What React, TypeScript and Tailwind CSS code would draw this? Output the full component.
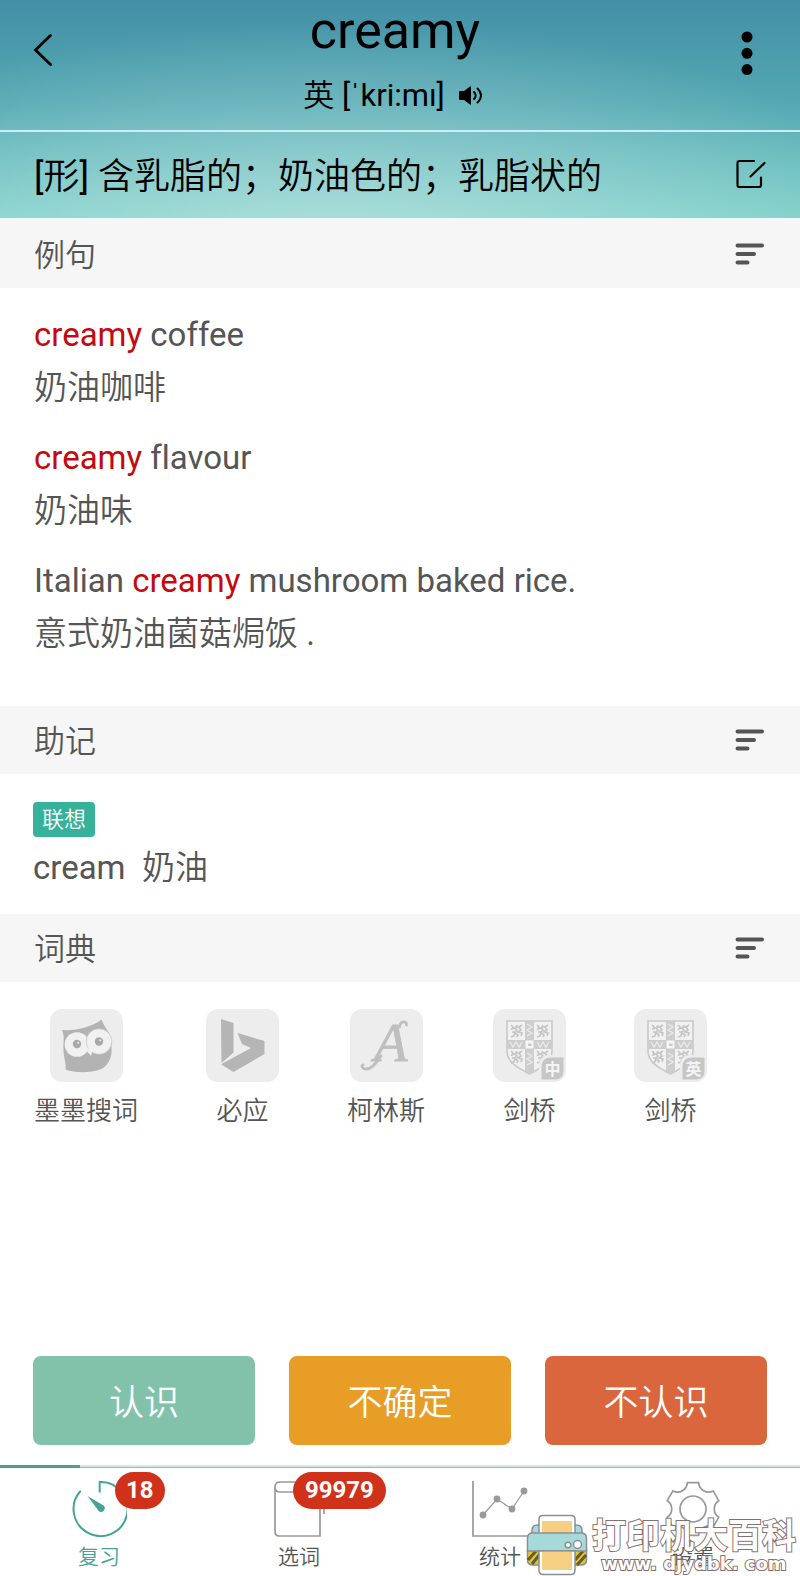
import type { ReactNode } from "react"

const examples = [
  { before: "", word: "creamy", after: " coffee", zh: "奶油咖啡" },
  { before: "", word: "creamy", after: " flavour", zh: "奶油味" },
  { before: "Italian ", word: "creamy", after: " mushroom baked rice.", zh: "意式奶油菌菇焗饭 ." },
]

function SectionHeader({ title }: { title: string }) {
  return (
    <div className="flex h-[68px] items-center justify-between bg-[#f6f6f6] pl-[34px] pr-[35px]">
      <h2 className="pt-1 text-[31px] leading-10">{title}</h2>
      <button type="button" aria-label={`${title}排序`}>
        <svg width="30" height="22" viewBox="0 0 30 22" stroke="#555" strokeWidth="4" strokeLinecap="round">
          <path d="M2.5 2.5H27M2.5 11H19M2.5 19.5H12.5" />
        </svg>
      </button>
    </div>
  )
}

function OwlIcon() {
  return (
    <svg className="size-[73px]" viewBox="0 0 73 73">
      <path
        d="M12 21C26 22 42 18 51.5 10.5C53 14 55 18 57 21C61 25 62 35 61.5 44C60 53 56 58 50 60.5C40 64 25 64 15.5 60.5C16.5 56 14 50 13.5 42C13 34 15 28 12 21Z"
        fill="#b3b3b3"
      />
      <circle cx="27" cy="35.5" r="12.3" fill="#f1f1f1" />
      <circle cx="49" cy="32.5" r="12.8" fill="#f1f1f1" stroke="#c4c4c4" strokeWidth=".7" />
      <path d="M35 40L43 39L41 47Z" fill="#f1f1f1" />
      <circle cx="27" cy="35" r="4.2" fill="#a9a9a9" />
      <circle cx="49" cy="32.5" r="4.2" fill="#a9a9a9" />
      <circle cx="28.2" cy="33.7" r="1" fill="#eee" />
      <circle cx="50.2" cy="31.2" r="1" fill="#eee" />
    </svg>
  )
}

function BingIcon() {
  return (
    <svg className="size-[73px]" viewBox="0 0 73 73" fill="#b5b5b5">
      <path d="M15 10L27.5 14V43.5L15.5 54Z" />
      <path d="M31.5 24L58.5 32V45L27.5 63L15 55.2L45 39L36 35Z" />
    </svg>
  )
}

function CollinsIcon() {
  return (
    <svg className="size-[73px]" viewBox="0 0 73 73">
      <text
        x="24"
        y="52"
        fontFamily="Liberation Serif, serif"
        fontStyle="italic"
        fontSize="55"
        fill="#bfbfbf"
        stroke="#bfbfbf"
        strokeWidth=".8"
      >
        A
      </text>
      <path
        d="M49.5 18C50 12 57 11 56.5 16M31 47C25 56 21 60 16 60C12 60 11 57 13 56"
        fill="none"
        stroke="#bfbfbf"
        strokeWidth="2.8"
        strokeLinecap="round"
      />
    </svg>
  )
}

function CambridgeIcon({ mark }: { mark: string }) {
  const quarters = [
    [17, 15],
    [43, 15],
    [17, 41],
    [43, 41],
  ]
  return (
    <svg className="size-[73px]" viewBox="0 0 73 73">
      <path d="M14 12H59V42C59 54 46 60 36.5 65C27 60 14 54 14 42Z" fill="#f1f1f1" stroke="#c9c9c9" strokeWidth="1.6" />
      <path d="M32 12H41V62L36.5 65L32 62ZM14 31H59V40H14Z" fill="#cdcdcd" />
      <path
        d="M34 15L39 18L34 21L39 24L34 27M34 44L39 47L34 50L39 53L34 56M17 33L20 38L23 33L26 38L29 33M44 33L47 38L50 33L53 38L56 33"
        fill="none"
        stroke="#ececec"
        strokeWidth="1.2"
      />
      <path d="M32.5 31.5H40.5V39.5H32.5Z" fill="#f6f6f6" />
      <path d="M35 34.5H38.5V37H35Z" fill="#c9c9c9" />
      {quarters.map(([x, y]) => (
        <path
          key={`${x}-${y}`}
          transform={`translate(${x} ${y})`}
          d="M1 1L3 3L2 5L5 4L7 6L5 8L2 8M7 1L6 3L9 3L12 1M9 3L11 6L8 8L12 9L11 12M5 8L4 12L1 13M5 9L8 11L7 13"
          fill="none"
          stroke="#c4c4c4"
          strokeWidth="1.6"
        />
      ))}
      <path d="M46 73V57Q46 46 57 46H73V73Z" fill="#ededed" />
      <path d="M48.5 70.5V58Q48.5 48.5 58 48.5H70.5V62Q70.5 70.5 62 70.5Z" fill="#c6c6c6" />
      <text
        x="59.5"
        y="65.5"
        textAnchor="middle"
        fontFamily="Noto Sans CJK SC, sans-serif"
        fontWeight="700"
        fontSize="16"
        fill="#f4f4f4"
      >
        {mark}
      </text>
    </svg>
  )
}

function TimerIcon() {
  return (
    <svg className="size-14" viewBox="0 0 56 56" fill="none" stroke="#43a397" strokeWidth="2">
      <path d="M9.7 9.7A27 27 0 1 0 28.7 1V11.5" />
      <path d="M16.5 15L32.5 24.5A3.6 3.6 0 1 1 27.5 29.8Z" fill="#43a397" stroke="none" />
    </svg>
  )
}

function BookIcon() {
  return (
    <svg className="size-14" viewBox="0 0 56 56" fill="none" stroke="#999" strokeWidth="1.7">
      <path d="M53 33V1H9Q4 1 4 6V50Q4 55 8 55H49V11H9Q4 11 4 6" />
    </svg>
  )
}

function ChartIcon() {
  return (
    <svg className="size-14" viewBox="0 0 56 56" fill="none" stroke="#999" strokeWidth="1.7">
      <path d="M1 0V55H56" />
      <path d="M11 34L25 18L40 28L52 10" strokeWidth="1.2" />
      <g fill="#999" stroke="none">
        <circle cx="11" cy="34" r="3.4" />
        <circle cx="25" cy="18" r="3.4" />
        <circle cx="40" cy="28" r="3.4" />
        <circle cx="52" cy="10" r="3.4" />
      </g>
    </svg>
  )
}

function GearIcon() {
  return (
    <svg className="size-14" viewBox="0 0 56 56" fill="none" stroke="#999" strokeWidth="1.7">
      <circle cx="28" cy="28" r="13" />
      <path d="M22.4 1.6H33.6A10 10 0 0 0 48.1 9.9L53.7 19.7A10 10 0 0 0 53.7 36.3L48.1 46.1A10 10 0 0 0 33.6 54.4H22.4A10 10 0 0 0 7.9 46.1L2.3 36.3A10 10 0 0 0 2.3 19.7L7.9 9.9A10 10 0 0 0 22.4 1.6Z" />
    </svg>
  )
}

function PrinterIcon() {
  return (
    <svg className="h-[62px] w-[62px] shrink-0" viewBox="0 0 62 62" stroke="#8a8f94" strokeWidth="1.5">
      <path d="M6 20V16Q6 11 12 11H50Q56 11 56 16V20Z" fill="#a5dad8" />
      <path d="M1.5 36V46Q1.5 51 7 51H55Q60.5 51 60.5 46V36Z" fill="#e3c52c" />
      <path d="M2 46L10 37M6 50L14 40M49 46L57 37M51 51L60 41" stroke="#665c30" strokeWidth="3" />
      <path d="M13 20V5Q13 1.5 17 1.5H45Q49 1.5 49 5V20Z" fill="#fff" />
      <path d="M16 20V7H46V20Z" fill="#f7cf82" stroke="none" />
      <path d="M1.5 37V24Q1.5 19 7 19H55Q60.5 19 60.5 24V37Z" fill="#a5dad8" />
      <path d="M13 37H49V56Q49 60.5 45 60.5H17Q13 60.5 13 56Z" fill="#fff" />
      <path d="M16 38H46V56H16Z" fill="#f7cf82" stroke="none" />
      <circle cx="42" cy="31" r="2.8" fill="#fff" />
      <circle cx="51.5" cy="30.5" r="4" fill="#fff" />
    </svg>
  )
}

const dictionaries: { label: string; icon: ReactNode }[] = [
  { label: "墨墨搜词", icon: <OwlIcon /> },
  { label: "必应", icon: <BingIcon /> },
  { label: "柯林斯", icon: <CollinsIcon /> },
  { label: "剑桥", icon: <CambridgeIcon mark="中" /> },
  { label: "剑桥", icon: <CambridgeIcon mark="英" /> },
]

interface TabProps {
  label: string
  icon: ReactNode
  active?: boolean
  className?: string
  children?: ReactNode
}

function Tab({ label, icon, active, className = "", children }: TabProps) {
  return (
    <a href="#" className={`flex flex-col items-center gap-1.5 ${active ? "text-[#43a397]" : ""} ${className}`}>
      <span className="relative">
        {icon}
        {children}
      </span>
      <span className="text-[21px] leading-7">{label}</span>
    </a>
  )
}

export default function App() {
  return (
    <div className="relative flex min-h-screen flex-col overflow-hidden bg-white font-[Roboto,'Noto_Sans_CJK_SC_DemiLight','Noto_Sans_CJK_SC',sans-serif] text-[#555] [font-variant-ligatures:none]">
      <header className="border-b-2 border-[#e9fbfb] bg-[radial-gradient(ellipse_75%_100%_at_42%_110%,rgba(205,232,232,0.6),transparent),linear-gradient(to_bottom,#4390a6_0%,#53a8b2_48%,#7bd0c8_100%)] text-black">
        <div className="grid h-[132px] grid-cols-[1fr_auto_1fr] items-start border-b-2 border-[#c8f0f2] pl-[33px] pr-[47px]">
          <button type="button" aria-label="返回" className="mt-[33px] justify-self-start">
            <svg width="20" height="34" viewBox="0 0 20 34" fill="none" stroke="#000" strokeWidth="2.8" strokeLinecap="round">
              <path d="M17.5 2.5L2.5 17L17.5 31.5" />
            </svg>
          </button>
          <div className="flex flex-col items-center">
            <h1 className="pl-1 text-[52px] leading-[62px]">creamy</h1>
            <div className="mt-4 flex items-center gap-3.5 text-[31px] leading-9">
              <span>英 [ˈkri:mı]</span>
              <button type="button" aria-label="发音">
                <svg width="24" height="20" viewBox="0 0 24 20">
                  <path d="M0 6Q0 5 1 5H5L11 .5Q12 0 12 1V18Q12 19 11 18.5L5 14H1Q0 14 0 13Z" />
                  <path d="M15 6Q18.5 9.5 15 13M18.5 2.5Q25.5 9.5 18.5 16.5" fill="none" stroke="#000" strokeWidth="2" strokeLinecap="round" />
                </svg>
              </button>
            </div>
          </div>
          <button type="button" aria-label="更多" className="mt-[31px] justify-self-end">
            <svg width="12" height="45" viewBox="0 0 12 45">
              <circle cx="6" cy="6" r="5.5" />
              <circle cx="6" cy="22.3" r="5.5" />
              <circle cx="6" cy="38.6" r="5.5" />
            </svg>
          </button>
        </div>
        <div className="flex h-[86px] items-center justify-between px-[34px]">
          <p className="pt-1 text-[36px] leading-[48px]">[形] 含乳脂的；奶油色的；乳脂状的</p>
          <button type="button" aria-label="编辑">
            <svg width="30" height="32" viewBox="0 0 30 32" fill="none" stroke="#000" strokeWidth="2.2" strokeLinecap="round">
              <path d="M18 2H3.5Q1.5 2 1.5 4V26Q1.5 28 3.5 28H23Q25 28 25 26V18.5M14.5 17.5L28.5 4" />
            </svg>
          </button>
        </div>
      </header>

      <main className="flex-1">
        <SectionHeader title="例句" />
        <div className="flex flex-col gap-[17px] px-[34px] pb-[46px] pt-5 text-[33px] leading-[53px]">
          {examples.map((item) => (
            <div key={item.zh}>
              <p>
                {item.before}
                <span className="text-[#c40a10]">{item.word}</span>
                {item.after}
              </p>
              <p>{item.zh}</p>
            </div>
          ))}
        </div>

        <SectionHeader title="助记" />
        <div className="px-[33px] pb-5 pt-7">
          <span className="flex h-[35px] w-fit items-center rounded bg-[#37b29a] px-[9px] text-[22px] leading-7 text-white">
            联想
          </span>
          <p className="mt-1 whitespace-pre text-[33px] leading-[53px]">cream  奶油</p>
        </div>

        <SectionHeader title="词典" />
        <div className="flex gap-[68px] px-[34px] pb-5 pt-[27px]">
          {dictionaries.map((dict, i) => (
            <a key={i} href="#" className="flex min-w-[73px] flex-col items-center gap-[13px]">
              <span className="overflow-hidden rounded-xl bg-[#ededed]">{dict.icon}</span>
              <span className="text-[26px] leading-8">{dict.label}</span>
            </a>
          ))}
        </div>
      </main>

      <div className="grid grid-cols-3 gap-[34px] px-[33px] pb-5 text-[35px] leading-[83px] text-white">
        <button type="button" className="rounded-lg bg-[#82c2aa] pt-1.5">认识</button>
        <button type="button" className="rounded-lg bg-[#e89e26] pt-1.5">不确定</button>
        <button type="button" className="rounded-lg bg-[#da663e] pt-1.5">不认识</button>
      </div>

      <div className="h-[3px] border-b border-[#93beb9] bg-[#d5e8e5]">
        <div className="h-[3px] w-1/10 bg-[#4f9d98]" />
      </div>
      <nav className="grid grid-cols-4 pb-[5px] pt-[13px]">
        <Tab label="复习" icon={<TimerIcon />} active className="pr-0.5">
          <span className="absolute left-11 -top-[9px] rounded-full bg-[#d0311b] px-[11px] text-2xl font-bold leading-[37px] text-white">
            18
          </span>
        </Tab>
        <Tab label="选词" icon={<BookIcon />} className="pr-0.5">
          <span className="absolute left-[22px] -top-[9px] rounded-full bg-[#d0311b] px-3 text-2xl font-bold leading-[37px] text-white">
            99979
          </span>
        </Tab>
        <Tab label="统计" icon={<ChartIcon />} />
        <Tab label="设置" icon={<GearIcon />} className="pr-3.5" />
      </nav>

      <div className="pointer-events-none absolute bottom-0 right-0 flex items-end gap-1 pr-1">
        <PrinterIcon />
        <div className="flex flex-col items-center text-white [-webkit-text-stroke:2px_#85706f] [paint-order:stroke]">
          <span className="font-['Noto_Sans_CJK_SC',sans-serif] text-[34px] font-bold leading-9">打印机大百科</span>
          <span className="font-['DejaVu_Sans',sans-serif] text-lg font-bold leading-6">www. djydbk. com</span>
        </div>
      </div>
    </div>
  )
}
